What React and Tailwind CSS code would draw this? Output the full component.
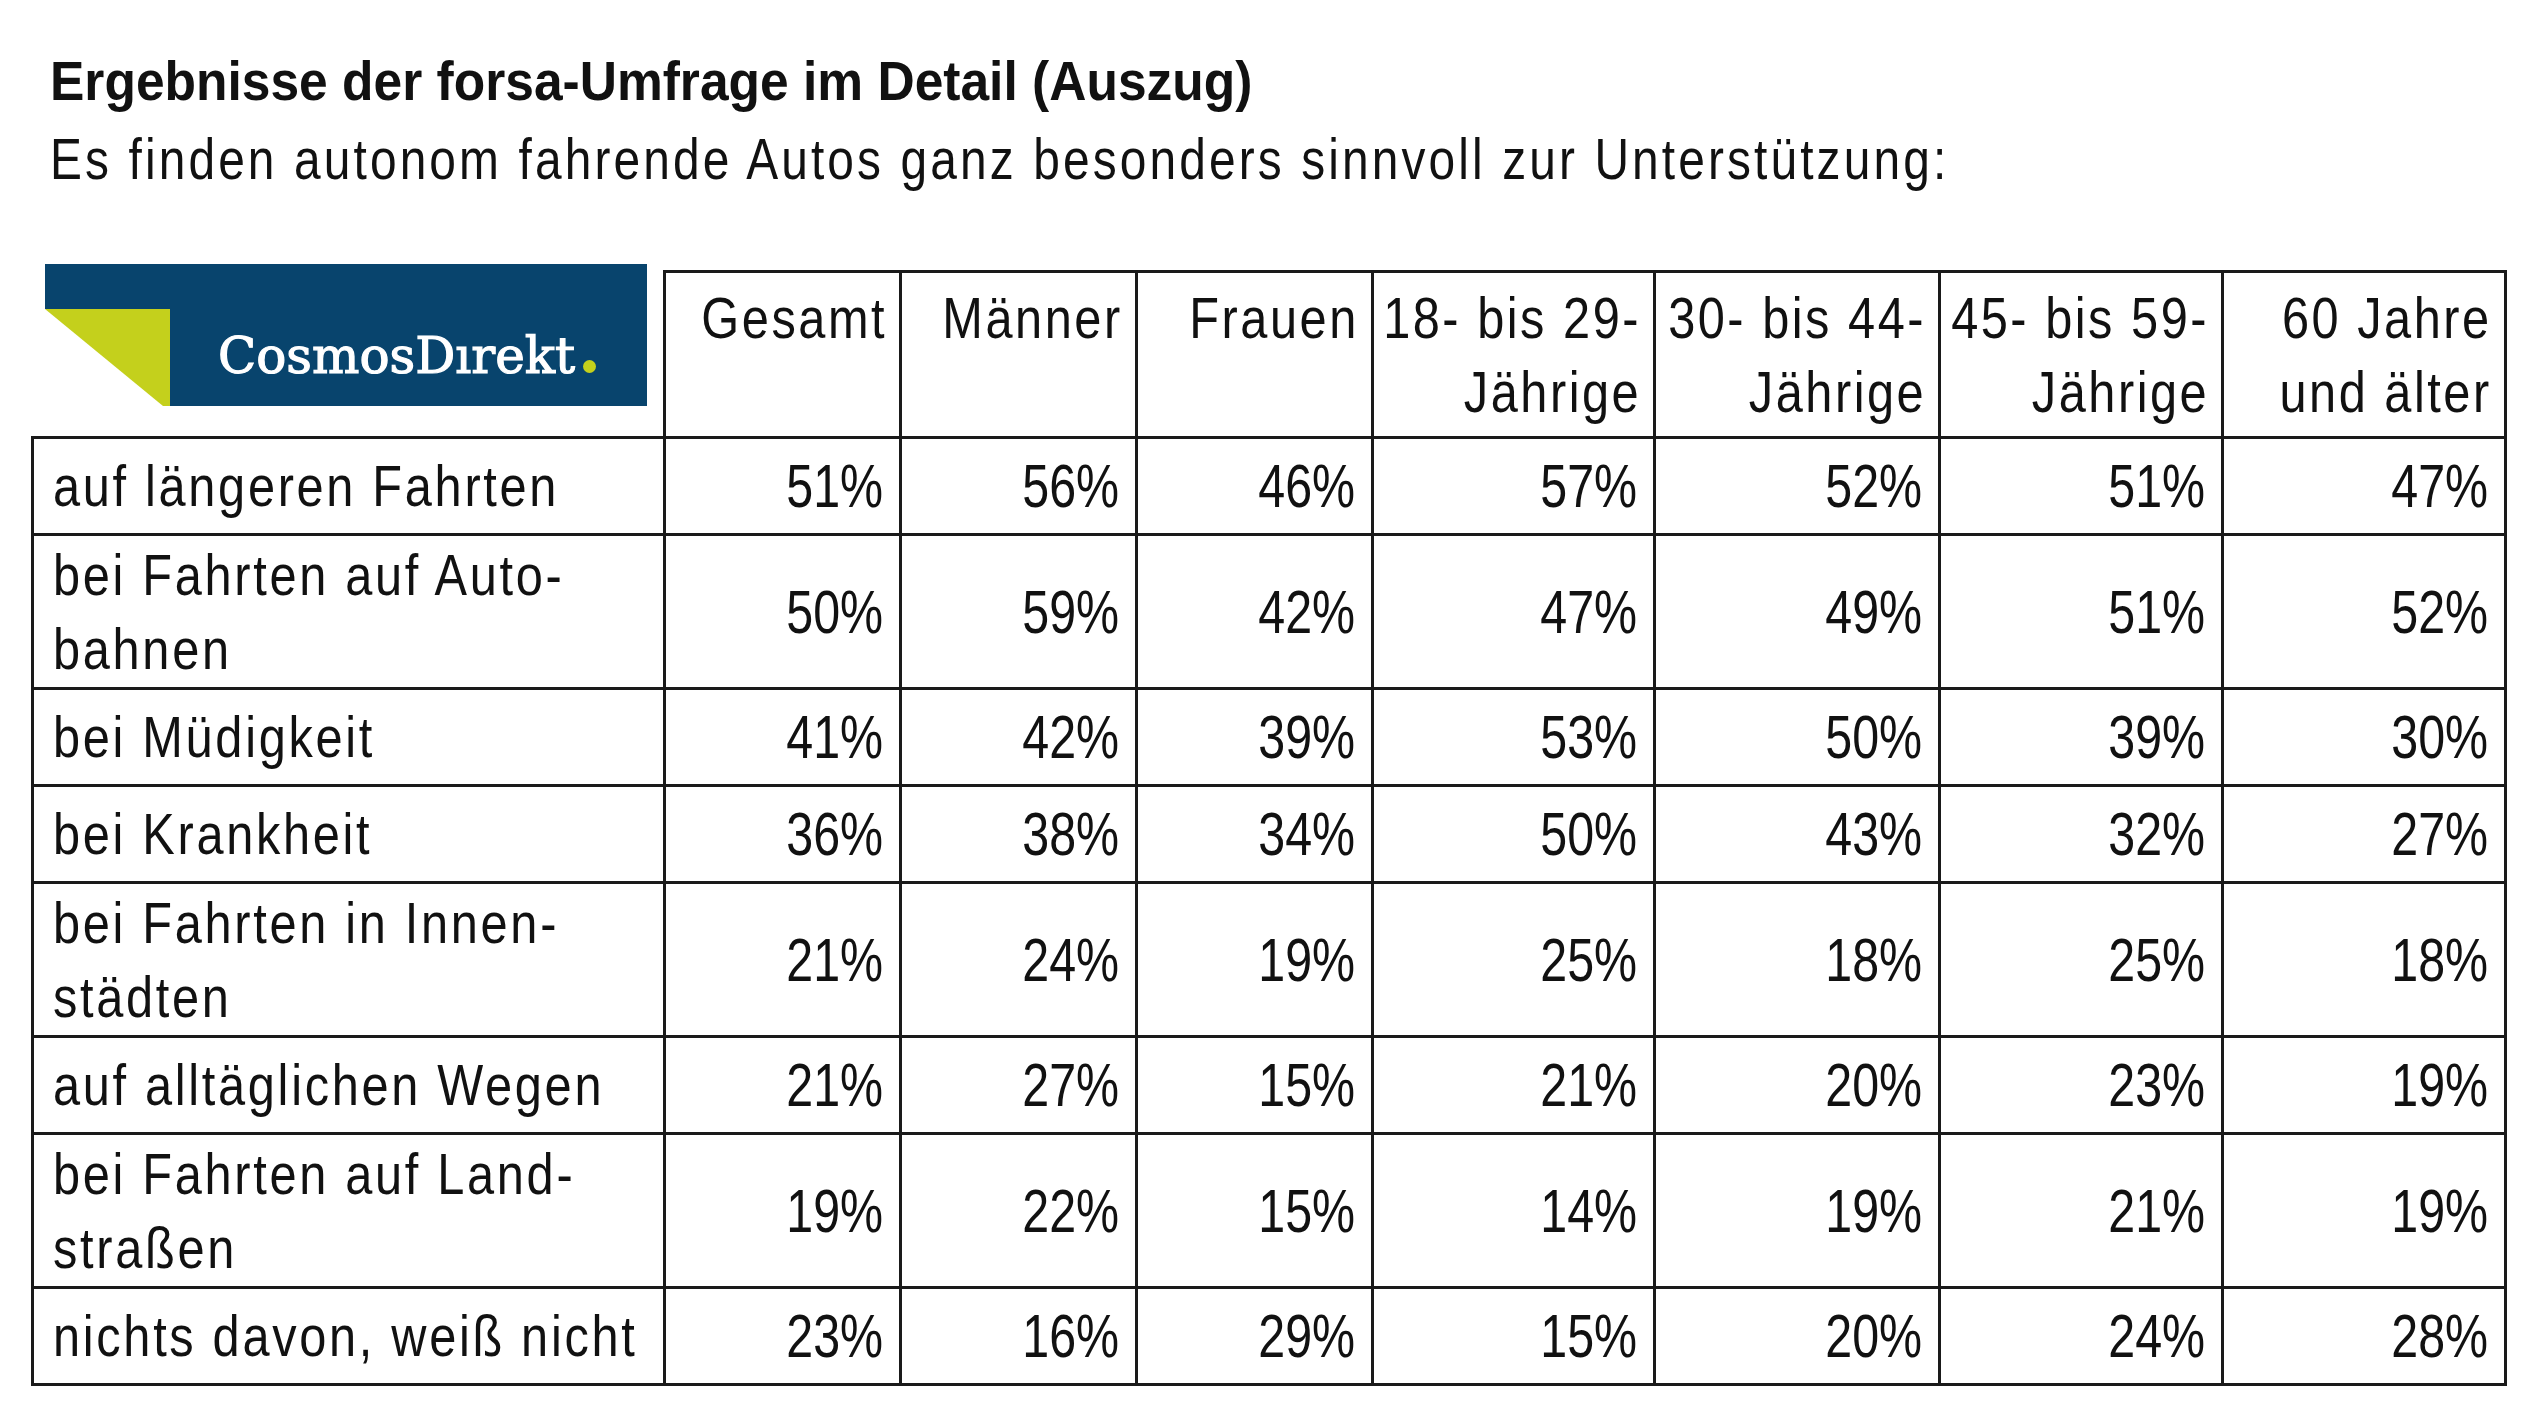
import React from "react";

const columns = [
  ["Gesamt"],
  ["Männer"],
  ["Frauen"],
  ["18- bis 29-", "Jährige"],
  ["30- bis 44-", "Jährige"],
  ["45- bis 59-", "Jährige"],
  ["60 Jahre", "und älter"],
];

const rows = [
  { label: ["auf längeren Fahrten"], values: [51, 56, 46, 57, 52, 51, 47] },
  { label: ["bei Fahrten auf Auto-", "bahnen"], values: [50, 59, 42, 47, 49, 51, 52] },
  { label: ["bei Müdigkeit"], values: [41, 42, 39, 53, 50, 39, 30] },
  { label: ["bei Krankheit"], values: [36, 38, 34, 50, 43, 32, 27] },
  { label: ["bei Fahrten in Innen-", "städten"], values: [21, 24, 19, 25, 18, 25, 18] },
  { label: ["auf alltäglichen Wegen"], values: [21, 27, 15, 21, 20, 23, 19] },
  { label: ["bei Fahrten auf Land-", "straßen"], values: [19, 22, 15, 14, 19, 21, 19] },
  { label: ["nichts davon, weiß nicht"], values: [23, 16, 29, 15, 20, 24, 28] },
];

// no condensed face installed, so the text is narrowed with scale-x
const Narrow = ({ children, right }) => (
  <span
    className={`inline-block shrink-0 whitespace-nowrap scale-x-[0.84] ${
      right ? "origin-right" : "origin-left"
    }`}
  >
    {children}
  </span>
);

const Logo = () => (
  <div className="-mt-[6px] ml-[14px] flex h-[142px] w-[602px]">
    <svg width="125" height="142" viewBox="0 0 125 142" className="shrink-0">
      <rect width="125" height="45" fill="#08446d" />
      <polygon points="0,45 125,45 125,142 118,142" fill="#c4d01c" />
    </svg>
    <div className="flex-1 bg-[#08446d] pl-[48px] pt-[67px] font-['DejaVu_Serif',serif] text-[50px] leading-[50px] tracking-normal text-white [-webkit-text-stroke:1.2px_white]">
      CosmosDırekt
      <span className="ml-[8px] inline-block h-[13px] w-[13px] rounded-full bg-[#c4d01c] [-webkit-text-stroke:0]" />
    </div>
  </div>
);

export default function App() {
  return (
    <div className="min-h-screen bg-white font-['Liberation_Sans',Arial,sans-serif] text-[#111]">
      <div className="pl-[50px] pt-[42px]">
        <h1 className="text-[56px] font-bold leading-[78px]">
          <span className="inline-block origin-left scale-x-[0.92] whitespace-nowrap">
            Ergebnisse der forsa-Umfrage im Detail (Auszug)
          </span>
        </h1>
        <p className="text-[57px] leading-[78px] tracking-[3.7px]">
          <Narrow>Es finden autonom fahrende Autos ganz besonders sinnvoll zur Unterstützung:</Narrow>
        </p>
      </div>

      <div className="ml-[31px] mt-[72px] grid w-[2476px] grid-cols-[635px_236px_236px_236px_282px_285px_283px_283px] text-[58px] leading-[74px]">
        {/* header */}
        <div className="h-[169px] border-b-[3px] border-r-[3px] border-[#1a1a1a]">
          <Logo />
        </div>
        {columns.map((lines) => (
          <div
            key={lines.join(" ")}
            className="h-[169px] border-b-[3px] border-r-[3px] border-t-[3px] border-[#1a1a1a] pr-[12px] pt-[8px] tracking-[3px]"
          >
            {lines.map((l) => (
              <div key={l} className="flex justify-end">
                <Narrow right>{l}</Narrow>
              </div>
            ))}
          </div>
        ))}

        {/* body */}
        {rows.map((row) => (
          <React.Fragment key={row.label.join(" ")}>
            <div
              className={`flex flex-col justify-center border-b-[3px] border-l-[3px] border-r-[3px] border-[#1a1a1a] pl-[19px] tracking-[3.2px] ${
                row.label.length > 1 ? "h-[154px]" : "h-[97px]"
              }`}
            >
              {row.label.map((l) => (
                <div key={l}>
                  <Narrow>{l}</Narrow>
                </div>
              ))}
            </div>
            {row.values.map((v, i) => (
              <div
                key={i}
                className="flex items-center justify-end border-b-[3px] border-r-[3px] border-[#1a1a1a] pr-[16px] text-[62px]"
              >
                <span className="inline-block shrink-0 origin-right scale-x-[0.78] whitespace-nowrap">
                  {v}%
                </span>
              </div>
            ))}
          </React.Fragment>
        ))}
      </div>
    </div>
  );
}
